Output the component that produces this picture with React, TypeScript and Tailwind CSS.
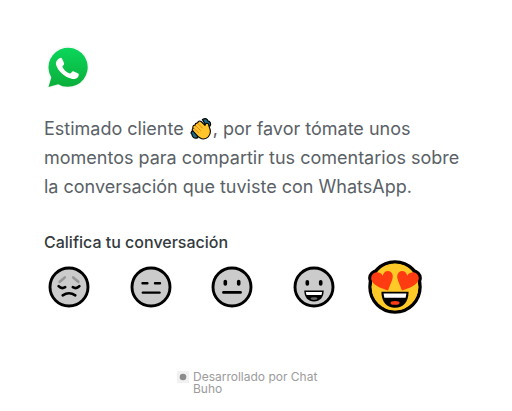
import { useState } from 'react';
import type { ReactNode } from 'react';

function WhatsAppLogo() {
  return (
    <svg viewBox="1 0 48 48" className="block size-12" role="img" aria-label="WhatsApp">
      <defs>
        <linearGradient id="wa" x1="0" y1="0" x2="0" y2="1">
          <stop offset="0" stopColor="#0bd65b" />
          <stop offset="1" stopColor="#0bae3a" />
        </linearGradient>
      </defs>
      <path
        d="M5.5 43L8.3 33.4A19.6 19.6 0 1 1 15.2 40.2Z"
        fill="url(#wa)"
        stroke="#f8f8f8"
        strokeWidth="3"
        strokeLinejoin="round"
        paintOrder="stroke"
      />
      <path
        d="M16.6 14.3C17.4 13.5 18.6 13.6 19.1 14.7L21.1 19.2C21.6 20.4 19.4 22 19.3 22.7C20.9 25.9 23.6 28.3 26.9 29.6C27.9 29.4 29.2 26.8 30.3 27.2L35.2 29.6C36.2 30.1 35.8 31.8 35 32.9C33.4 35 30.8 35.3 28.6 34.7C20.3 32.3 14.7 26.4 13 20.4C12.5 18 14.4 15.4 16.6 14.3Z"
        fill="#fff"
      />
    </svg>
  );
}

function WavingHand() {
  return (
    <svg viewBox="0 0 24 24" className="inline-block size-6 align-[-6px]" role="img" aria-label="mano saludando">
      <g fill="#1d6a85" stroke="#000" strokeWidth="1.2">
        <path d="M13.5 2.6C16.5 0.8 18.6 2 18.8 3.8C21 4.2 22.6 6.6 21 9L16.6 8Z" />
        <path d="M4.4 13.6C1.6 14.2 1.6 16.8 3 17.4C2.8 19.8 5.4 22 8.8 20.6L8 16.5Z" />
      </g>
      <path
        d="M4 9.2C4.5 8.2 5.6 8 6.4 8.6C5.6 6.8 7.2 5.6 8.6 6.3C8.6 4.2 10.7 3.3 12.1 4.5L16 8.4C16.2 5.7 19.4 5.6 19.8 8.2C20 10.2 21.3 11.7 21.4 14.2C21.5 18.6 18.2 22 14.5 22C11.5 22 9 19.8 7 17.4L4 14C2.8 12.8 3.1 11.5 4.4 11.2C3.7 10.7 3.6 9.9 4 9.2Z"
        fill="#ffc52b"
        stroke="#000"
        strokeWidth="1.1"
        strokeLinejoin="round"
      />
      <path d="M4.8 11.2L9.6 15.8M6.4 8.6L11.4 13.4M8.6 6.3L13.4 11.1" fill="none" stroke="#df851d" strokeWidth="1" strokeLinecap="round" />
    </svg>
  );
}

function Face({ children }: { children: ReactNode }) {
  return (
    <svg viewBox="0 0 48 48" className="block size-12 overflow-visible" fill="none" stroke="#000" strokeWidth="2.6" strokeLinecap="round" aria-hidden="true">
      <circle cx="24" cy="24" r="19" fill="#cbcbcb" strokeWidth="2.9" />
      {children}
    </svg>
  );
}

const heart = 'M18.8 26.6C14 24.8 8.8 23.4 6.7 19.6C4.6 15.7 8.5 11.4 12.8 13.4C14.1 14 14.6 14.9 14.8 15.6C15.2 12.6 18.5 10.8 20.9 12.8C24.5 16 20.5 21.2 18.8 26.6Z';

const ratings: { label: string; face: ReactNode }[] = [
  {
    label: 'Muy mala',
    face: (
      <Face>
        <path d="M14.7 18.8L19.8 14.4M28.2 14.4L33.3 18.8" stroke="#969696" />
        <path d="M13.6 23.2Q16.6 26.4 20.2 24.2M27.8 24.2Q31.4 26.4 34.4 23.2M17.7 32.4Q24 28.2 30.3 32.4" />
      </Face>
    ),
  },
  {
    label: 'Mala',
    face: (
      <Face>
        <path d="M15.5 20.3H20.4M28 20.3H33M15.8 29.6H32.6" strokeWidth="2.4" />
      </Face>
    ),
  },
  {
    label: 'Regular',
    face: (
      <Face>
        <path d="M17.3 18.6V21M30.7 18.6V21" strokeWidth="3.6" />
        <path d="M15.4 29.4H32.6" />
      </Face>
    ),
  },
  {
    label: 'Buena',
    face: (
      <Face>
        <path d="M17.3 18.8V21M30.7 18.8V21" strokeWidth="3.6" />
        <path d="M14.3 27.5H33.7C33.7 34.5 29.8 38.5 24 38.5S14.3 34.5 14.3 27.5Z" fill="#000" stroke="none" />
        <path d="M15.8 29H32.2L31.5 32H16.5Z" fill="#fff" stroke="none" />
        <ellipse cx="24" cy="35.6" rx="3.4" ry="1.4" fill="#666" stroke="none" />
      </Face>
    ),
  },
  {
    label: 'Excelente',
    face: (
      <svg viewBox="0 0 48 48" className="block size-12 overflow-visible" aria-hidden="true">
        <circle cx="24" cy="24" r="18.8" fill="#ffc928" stroke="#000" strokeWidth="2.6" />
        <g fill="#ff3b12" stroke="#000" strokeWidth="4.4" strokeLinejoin="round">
          <path d={heart} />
          <path d={heart} transform="matrix(-1 0 0 1 48 0)" />
        </g>
        <circle cx="24" cy="24" r="17.6" fill="#ffc928" />
        <g fill="#ff3b12">
          <path d={heart} />
          <path d={heart} transform="matrix(-1 0 0 1 48 0)" />
        </g>
        <path d="M13.8 27.5H34.2C34.2 35.5 30 39.6 24 39.6S13.8 35.5 13.8 27.5Z" />
        <path d="M15.4 28.8H32.6L32 32H16Z" fill="#fff" />
        <ellipse cx="24" cy="36" rx="3.4" ry="1.4" fill="#ff3b12" />
      </svg>
    ),
  },
];

export default function App() {
  const [selected, setSelected] = useState(4);
  return (
    <main className="bg-white px-11 pt-11 font-['Inter',sans-serif]">
      <WhatsAppLogo />
      <p className="mt-[22px] text-lg leading-[29px] text-[#5a6166]">
        Estimado cliente <WavingHand />, por favor tómate unos momentos para compartir tus comentarios sobre la
        conversación que tuviste con WhatsApp.
      </p>
      <h2 id="rating" className="mt-[29px] text-base font-medium text-[#343a3e]">
        Califica tu conversación
      </h2>
      <div role="group" aria-labelledby="rating" className="mt-[9px] ml-px flex max-w-[374px] justify-between">
        {ratings.map(({ label, face }, i) => (
          <button
            key={label}
            type="button"
            aria-label={label}
            aria-pressed={selected === i}
            onClick={() => setSelected(i)}
            className={selected === i ? 'scale-[1.33]' : ''}
          >
            {face}
          </button>
        ))}
      </div>
      <footer className="mt-15 flex justify-center gap-1 text-xs leading-3 text-[#9b9b9b]">
        <svg viewBox="0 0 12 12" className="size-3 shrink-0" aria-hidden="true">
          <rect width="12" height="12" rx="1" fill="#f1f1f1" />
          <circle cx="6" cy="6" r="3.3" fill="#8c8c8c" />
        </svg>
        <span className="max-w-[142px]">Desarrollado por Chat Buho</span>
      </footer>
    </main>
  );
}
